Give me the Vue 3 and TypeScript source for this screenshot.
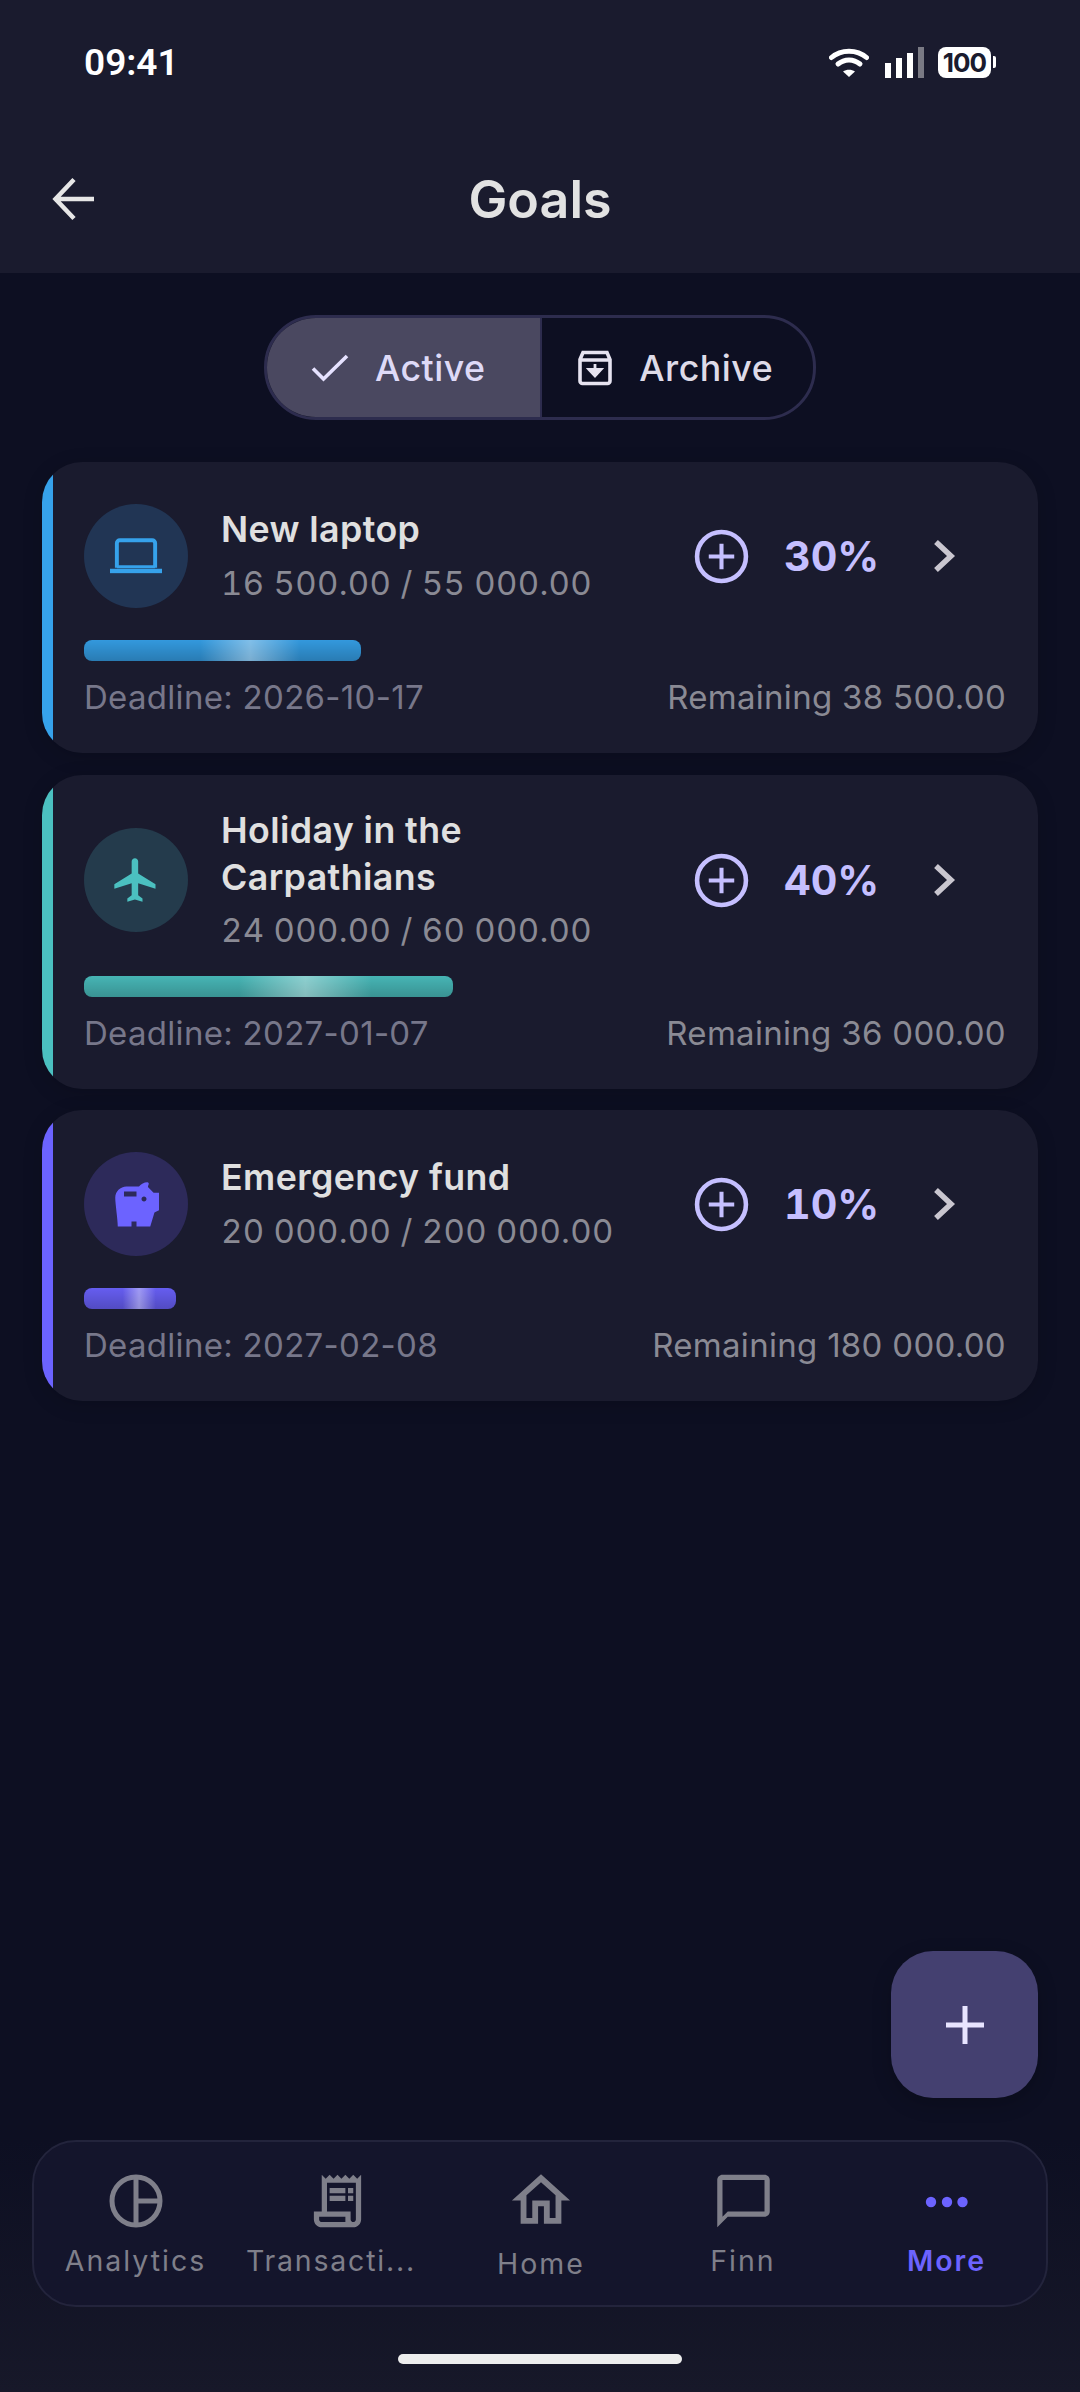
<template>
  <div class="screen">
    <header class="top">
      <div class="status">
        <span class="time">09:41</span>
        <div class="status-icons">
          <svg class="wifi" width="40" height="30" viewBox="0 0 40 30">
            <path d="M2.500 9.500C12 1 28 1 37.500 9.500" class="wave" />
            <path d="M9 16c6.500-5.500 15.500-5.500 22 0" class="wave" />
            <path d="M14 23.500l6 5.500 6-5.500c-3.500-2.500-8.500-2.500-12 0z" fill="#fff" />
          </svg>
          <div class="signal">
            <i style="height: 15px"></i>
            <i style="height: 20px"></i>
            <i style="height: 25px"></i>
            <i class="off" style="height: 31px"></i>
          </div>
          <div class="battery"><span>100</span></div>
          <i class="nub"></i>
        </div>
      </div>
      <div class="bar">
        <svg class="back" width="44" height="44" viewBox="0 0 44 44" fill="none">
          <path d="M42 22H4M22 2.500 3.500 22 22 41.500" stroke="#e6e6e6" stroke-width="4.500" />
        </svg>
        <h1>Goals</h1>
      </div>
    </header>

    <main class="content">
      <div class="toggle">
        <div class="seg on">
          <svg width="38" height="28" viewBox="0 0 38 28" fill="none">
            <path d="M2 14.500 12.500 25 36 2" stroke="#e6e2ff" stroke-width="3.600" />
          </svg>
          <span>Active</span>
        </div>
        <div class="seg">
          <svg width="36" height="36" viewBox="0 0 36 36" fill="none">
            <path
              d="M3 9.500 6 2.500h24l3 7V31a2.500 2.500 0 0 1-2.500 2.500h-25A2.500 2.500 0 0 1 3 31zM4 10h28"
              stroke="#e6e3f0"
              stroke-width="3.600"
            />
            <path d="M18 14v8M12 19.500l6 6.500 6-6.500z" stroke="#e6e3f0" stroke-width="2.800" fill="#e6e3f0" />
          </svg>
          <span>Archive</span>
        </div>
      </div>

      <section
        v-for="goal in goals"
        :key="goal.name"
        class="card"
        :style="{ '--accent': goal.color, '--soft': goal.soft }"
      >
        <div class="row">
          <div class="badge">
            <svg v-if="goal.icon === 'laptop'" width="52" height="36" viewBox="0 0 53 36" fill="none">
              <path d="M7 30V5a3 3 0 0 1 3-3h33a3 3 0 0 1 3 3v25" stroke="currentColor" stroke-width="4" />
              <path d="M7 29h39" stroke="currentColor" stroke-width="3" />
              <rect x="0" y="31" width="53" height="4.500" fill="currentColor" />
            </svg>
            <svg v-else-if="goal.icon === 'plane'" width="52" height="52" viewBox="0 0 24 24" fill="currentColor">
              <path d="M21 16v-2l-8-5V3.500c0-.83-.67-1.500-1.500-1.500S10 2.670 10 3.500V9l-8 5v2l8-2.500V19l-2 1.500V22l3.500-1 3.500 1v-1.500L13 19v-5.500l8 2.500z" />
            </svg>
            <svg v-else class="piggy" width="60" height="60" viewBox="0 0 24 24" fill="currentColor" fill-rule="evenodd">
              <path d="M19.830 7.500l-2.270-2.270c.07-.42.18-.81.32-1.150.16-.38-.13-.8-.55-.78-1.280.06-2.470.66-3.330 1.700H9C6.500 5 4.500 7 4.500 9.500c0 2.500 1 8.500 1 11.500H11v-2h2v2h5.500l1.680-5.590L22 14.470V7.500h-2.170zM13 9H8V7h5v2zm3 2c-.55 0-1-.45-1-1s.45-1 1-1 1 .45 1 1-.45 1-1 1z" />
            </svg>
          </div>
          <div class="info">
            <div class="name">{{ goal.name }}</div>
            <div class="amount">{{ goal.amount }}</div>
          </div>
          <div class="actions">
            <svg width="55" height="55" viewBox="0 0 54 54" fill="none" stroke="#c5bfff">
              <circle cx="27" cy="27" r="24" stroke-width="4.500" />
              <path d="M27 14.500v25M14.500 27h25" stroke-width="4" />
            </svg>
            <span class="pct">{{ goal.percent }}%</span>
            <svg class="chev" width="24" height="34" viewBox="0 0 24 34" fill="none">
              <path d="M4 3l15 14L4 31" stroke="#c9c6cf" stroke-width="5.500" />
            </svg>
          </div>
        </div>
        <div class="progress" :style="{ width: goal.percent + '%' }"></div>
        <div class="foot">
          <span class="deadline">Deadline: {{ goal.deadline }}</span>
          <span class="left">Remaining {{ goal.remaining }}</span>
        </div>
      </section>

      <button class="fab" type="button" aria-label="Add goal">
        <svg width="38" height="38" viewBox="0 0 38 38">
          <path d="M19 0v38M0 19h38" stroke="#e8e4ff" stroke-width="5" />
        </svg>
      </button>
    </main>

    <footer class="bottom">
      <nav class="nav">
        <div class="tab first">
          <svg width="56" height="56" viewBox="0 0 56 56" fill="none" stroke="#7f7f8a" stroke-width="5">
            <circle cx="28" cy="28" r="24" />
            <path d="M28 4v48M28 28h24" />
          </svg>
          <span>Analytics</span>
        </div>
        <div class="tab short">
          <svg width="63" height="56" viewBox="0 1.500 24 21" fill="#7f7f8a">
            <path d="M19.500 3.500 18 2l-1.500 1.500L15 2l-1.500 1.500L12 2l-1.500 1.500L9 2 7.500 3.500 6 2v14H3v3c0 1.660 1.340 3 3 3h12c1.660 0 3-1.340 3-3V2l-1.500 1.500zM15 20H6c-.55 0-1-.45-1-1v-1h10v2zm4-1c0 .55-.45 1-1 1s-1-.45-1-1v-3H8V5h11v14z" />
            <path d="M9 7h6v2H9zM16 7h2v2h-2zM9 10h6v2H9zM16 10h2v2h-2z" />
          </svg>
          <span>Transacti...</span>
        </div>
        <div class="tab home">
          <svg width="72" height="64" viewBox="0 1.500 24 22" fill="#7f7f8a">
            <path d="M12 5.690l5 4.500V18h-2v-6H9v6H7v-7.810l5-4.500M12 3L2 12h3v8h6v-6h2v6h6v-8h3L12 3z" />
          </svg>
          <span>Home</span>
        </div>
        <div class="tab">
          <svg width="63" height="56" viewBox="0 1.500 24 21" fill="#7f7f8a">
            <path d="M20 2H4c-1.100 0-2 .9-2 2v18l4-4h14c1.100 0 2-.9 2-2V4c0-1.100-.9-2-2-2zm0 14H6l-2 2V4h16v12z" />
          </svg>
          <span>Finn</span>
        </div>
        <div class="tab active">
          <svg width="56" height="56" viewBox="0 0 56 56" fill="#6c63ff">
            <circle cx="12" cy="29" r="5.200" />
            <circle cx="28" cy="29" r="5.200" />
            <circle cx="43.500" cy="29" r="5.200" />
          </svg>
          <span>More</span>
        </div>
      </nav>
      <div class="home-line"></div>
    </footer>
  </div>
</template>

<script setup lang="ts">
interface Goal {
  name: string;
  amount: string;
  percent: number;
  deadline: string;
  remaining: string;
  color: string;
  soft: string;
  icon: "laptop" | "plane" | "piggy";
}

const goals: Goal[] = [
  {
    name: "New laptop",
    amount: "16 500.00 / 55 000.00",
    percent: 30,
    deadline: "2026-10-17",
    remaining: "38 500.00",
    color: "#36a2eb",
    soft: "#213554",
    icon: "laptop",
  },
  {
    name: "Holiday in the Carpathians",
    amount: "24 000.00 / 60 000.00",
    percent: 40,
    deadline: "2027-01-07",
    remaining: "36 000.00",
    color: "#4bc0c0",
    soft: "#243b4c",
    icon: "plane",
  },
  {
    name: "Emergency fund",
    amount: "20 000.00 / 200 000.00",
    percent: 10,
    deadline: "2027-02-08",
    remaining: "180 000.00",
    color: "#6c63ff",
    soft: "#2d2a5a",
    icon: "piggy",
  },
];
</script>

<style>
html,
body {
  margin: 0;
  background: #0d0f22;
}
</style>

<style scoped>
.screen {
  position: relative;
  display: flex;
  flex-direction: column;
  height: 2392px;
  overflow: hidden;
  background: #0d0f22;
  font-family: Inter, "Noto Sans", sans-serif;
}

.top {
  height: 273px;
  background: #1a1b2e;
}

.status {
  display: flex;
  justify-content: space-between;
  align-items: center;
  height: 124px;
  padding: 0 84px;
  box-sizing: border-box;
}

.time {
  color: #fff;
  font-family: Roboto, sans-serif;
  font-size: 37px;
  font-weight: 600;
}

.status-icons {
  display: flex;
  align-items: flex-end;
  height: 32px;
}

.wave {
  fill: none;
  stroke: #fff;
  stroke-width: 5;
  stroke-linecap: round;
}

.wifi {
  margin: 0 16px 0 0;
}

.signal {
  display: flex;
  align-items: flex-end;
  gap: 5px;
  margin-right: 14px;
}

.signal i {
  width: 6px;
  background: #fff;
}

.signal i.off {
  background: #7a7a84;
}

.battery {
  width: 53px;
  height: 31px;
  border-radius: 8px;
  background: #fff;
  display: flex;
  align-items: center;
  justify-content: center;
  color: #1a1b2e;
  font-size: 26px;
  font-weight: 700;
  letter-spacing: -1px;
}

.nub {
  width: 3px;
  height: 12px;
  margin: 0 0 10px 2px;
  background: #fff;
  border-radius: 0 2px 2px 0;
}

.bar {
  position: relative;
  display: flex;
  align-items: center;
  justify-content: center;
  height: 150px;
}

.back {
  position: absolute;
  left: 52px;
  top: 53px;
}

h1 {
  margin: 0;
  color: #e2e2e2;
  font-size: 52px;
  font-weight: 600;
}

.content {
  flex: 1;
  position: relative;
  padding: 42px 42px 0;
  display: flex;
  flex-direction: column;
  gap: 21.300px;
}

.toggle {
  align-self: center;
  display: flex;
  width: 552px;
  height: 105px;
  box-sizing: border-box;
  margin-bottom: 21px;
  border: 3px solid #2d2c4e;
  border-radius: 52px;
  overflow: hidden;
}

.seg {
  display: flex;
  align-items: center;
  justify-content: center;
  gap: 26px;
  color: #dedbe8;
  font-size: 35.750px;
  font-weight: 500;
  letter-spacing: 0.5px;
  box-sizing: border-box;
  width: 272px;
  padding-right: 4px;
}

.seg.on {
  width: 275px;
  background: #4a4860;
  color: #dedaf7;
  border-right: 2px solid #2d2c4e;
  padding-right: 10px;
}

.card {
  position: relative;
  overflow: hidden;
  padding: 32px 32px 33px 42px;
  border-radius: 40px;
  background: #1a1b2e;
  box-shadow: 0 4px 20px rgba(0, 0, 0, 0.16);
}

.card::before {
  content: "";
  position: absolute;
  left: 0;
  top: 0;
  bottom: 0;
  width: 11px;
  background: var(--accent);
}

.row {
  display: flex;
  align-items: center;
  min-height: 124px;
  margin-bottom: 22px;
}

.badge {
  flex: none;
  display: flex;
  align-items: center;
  justify-content: center;
  width: 104px;
  height: 104px;
  margin-right: 33px;
  border-radius: 50%;
  background: var(--soft);
  color: var(--accent);
}

.piggy {
  margin-right: 4px;
}

.info {
  flex: 1;
  min-width: 0;
  padding-right: 40px;
}

.name {
  color: #e0e0e0;
  font-size: 35.750px;
  font-weight: 600;
  letter-spacing: 0.4px;
  line-height: 47px;
  margin-bottom: 5.500px;
}

.amount {
  color: #8a8a94;
  font-size: 33px;
  font-variant-numeric: tabular-nums;
  letter-spacing: 0.3px;
  line-height: 48px;
  white-space: nowrap;
}

.actions {
  flex: none;
  display: flex;
  align-items: center;
  width: 312px;
}

.pct {
  width: 148px;
  margin-left: 35px;
  color: #c5bfff;
  font-size: 41.250px;
  font-variant-numeric: tabular-nums;
  font-weight: 700;
}

.progress {
  height: 21px;
  border-radius: 8px;
  background-color: var(--accent);
  background-image: linear-gradient(
      90deg,
      transparent 42%,
      rgba(255, 255, 255, 0.38) 60%,
      transparent 78%
    ),
    linear-gradient(180deg, rgba(0, 0, 0, 0.06), rgba(0, 0, 0, 0.24));
}

.foot {
  display: flex;
  justify-content: space-between;
  margin-top: 13px;
  font-size: 33px;
  letter-spacing: 0.3px;
  line-height: 46px;
}

.deadline {
  color: #77778a;
}

.left {
  color: #8a8a94;
}

.fab {
  position: absolute;
  right: 42px;
  top: 1678px;
  width: 147px;
  height: 147px;
  display: flex;
  align-items: center;
  justify-content: center;
  padding: 0;
  border: 0;
  border-radius: 42px;
  background: #444070;
  box-shadow: 0 6px 20px rgba(0, 0, 0, 0.2);
}

.bottom {
  height: 252px;
  padding: 0 32px;
  background: linear-gradient(180deg, #0d0f22, #171829);
}

.nav {
  display: grid;
  grid-template-columns: repeat(5, 1fr);
  height: 167px;
  box-sizing: border-box;
  padding-left: 2px;
  border: 2px solid #23243c;
  border-radius: 44px;
  background: #14152c;
}

.tab {
  display: flex;
  flex-direction: column;
  align-items: center;
  padding-top: 31px;
  color: #7f7f8a;
  font-size: 28.500px;
  letter-spacing: 2px;
  line-height: 40px;
}

.tab svg {
  height: 56px;
  margin-bottom: 12px;
}

.tab.first {
  padding-right: 3px;
}

.tab.short {
  padding-right: 3px;
  letter-spacing: 1.800px;
}

.tab.short span {
  margin-right: 13px;
}

.tab.home {
  padding-top: 28px;
}

.tab.home svg {
  height: 64px;
  margin-bottom: 10px;
}

.tab.active {
  padding-left: 3px;
  color: #6c63ff;
  font-weight: 600;
}

.home-line {
  width: 284px;
  height: 10px;
  margin: 47px auto 0;
  border-radius: 5px;
  background: #ededed;
}
</style>
